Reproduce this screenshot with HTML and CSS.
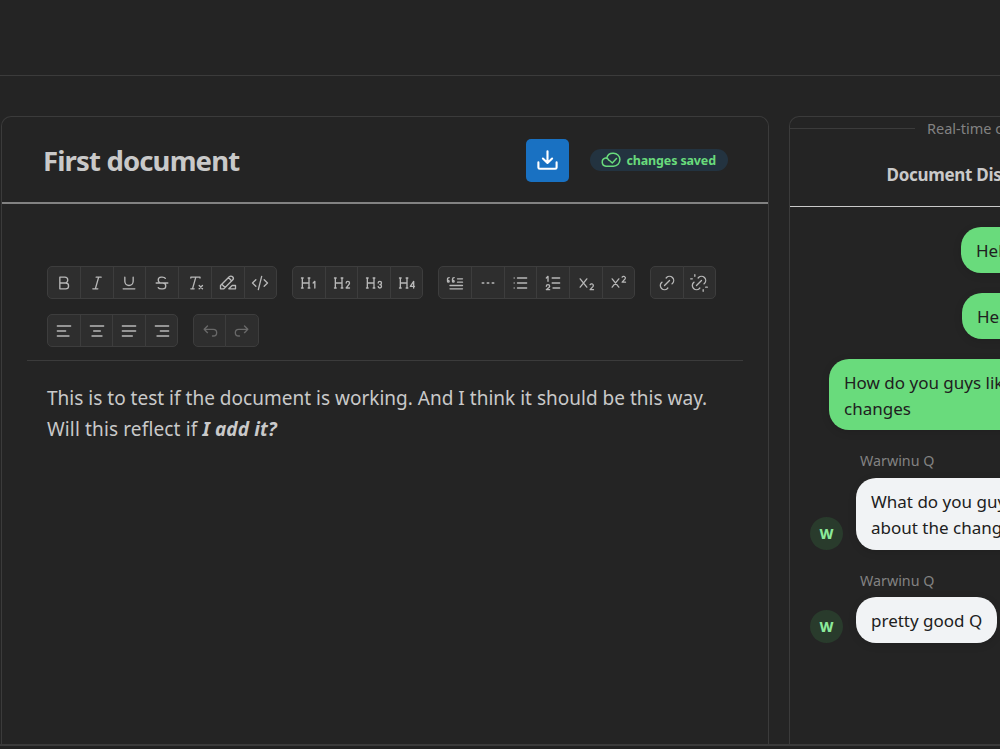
FILE: index.html
```
<!DOCTYPE html>
<html lang="en">
<head>
<meta charset="utf-8">
<title>First document</title>
<link rel="stylesheet" href="styles.css">
</head>
<body>
<div class="app">
  <header class="topbar"></header>
  <main class="workspace">
    <section class="card editor">
      <div class="editor-head">
        <h1 class="title">First document</h1>
        <button class="download" aria-label="Download"><svg viewBox="0 0 24 24"><path d="M2.5 14v5.200a1.400 1.400 0 0 0 1.400 1.400h16.200a1.400 1.400 0 0 0 1.400-1.400V14M12 2.300v12M7.200 10l4.800 4.600 4.800-4.600"/></svg></button>
        <div class="badge"><svg viewBox="0 0 20 16"><path d="M5 14.200a4.100 4.100 0 0 1-.5-8.100h1.200A6.500 6.500 0 0 1 12.300 1.300a6.400 6.400 0 0 1 6.600 6.300c0 3.700-2.700 6.600-6.400 6.600zM4.500 6.100a3.500 3.500 0 0 1 3.300 2M8.800 8.700l2.500 2.300 4.200-4.500"/></svg><span>changes saved</span></div>
      </div>
      <div class="toolbar">
        <div class="group marks">
          <button><svg viewBox="0 0 24 24"><path d="M7 5h6a3.500 3.500 0 0 1 0 7h-6zM13 12h1a3.500 3.500 0 0 1 0 7h-7v-7"/></svg></button>
          <button><svg viewBox="0 0 24 24"><path d="M11 5h6M7 19h6M14 5l-4 14"/></svg></button>
          <button><svg viewBox="0 0 24 24"><path d="M7 5v5a5 5 0 0 0 10 0v-5M5 19h14"/></svg></button>
          <button><svg viewBox="0 0 24 24"><path d="M5 12h14M16 6.500a4 2 0 0 0-4-1.500h-1a3.500 3.500 0 0 0 0 7h2a3.500 3.500 0 0 1 0 7h-1.500a4 2 0 0 1-4-1.500"/></svg></button>
          <button><svg viewBox="0 0 24 24"><path d="M17 15l4 4m0-4l-4 4M7 6v-1h11v1M7 19h4M13 5l-4 14"/></svg></button>
          <button><svg viewBox="0 0 24 24"><path d="M3 19h4l10.500-10.500a2.828 2.828 0 1 0-4-4l-10.500 10.500v4M12.500 5.500l4 4M4.500 13.500l4 4M21 15v4h-8l4-4z"/></svg></button>
          <button><svg viewBox="0 0 24 24"><path d="M7 8l-4 4l4 4M17 8l4 4l-4 4M14 4l-4 16"/></svg></button>
        </div>
        <div class="group">
          <button><svg viewBox="0 0 24 24"><path d="M19 18v-8l-2 2M4 6v12M12 6v12M11 18h2M3 18h2M4 12h8M3 6h2M11 6h2"/></svg></button>
          <button><svg viewBox="0 0 24 24"><path d="M17 12a2 2 0 1 1 4 0c0 .591-.417 1.318-.816 1.858l-3.184 4.143h4M4 6v12M12 6v12M11 18h2M3 18h2M4 12h8M3 6h2M11 6h2"/></svg></button>
          <button><svg viewBox="0 0 24 24"><path d="M19 14a2 2 0 1 0-2-2M17 16a2 2 0 1 0 2-2M4 6v12M12 6v12M11 18h2M3 18h2M4 12h8M3 6h2M11 6h2"/></svg></button>
          <button><svg viewBox="0 0 24 24"><path d="M20 18v-8l-4 6h5M4 6v12M12 6v12M11 18h2M3 18h2M4 12h8M3 6h2M11 6h2"/></svg></button>
        </div>
        <div class="group">
          <button><svg viewBox="0 0 24 24"><path d="M6 15h15M21 19h-15M15 11h6M21 7h-6M9 9h1a1 1 0 1 1-1 1v-2.500a2 2 0 0 1 2-2M3 9h1a1 1 0 1 1-1 1v-2.500a2 2 0 0 1 2-2"/></svg></button>
          <button><svg viewBox="0 0 24 24"><path d="M5 12h2M17 12h2M11 12h2"/></svg></button>
          <button><svg viewBox="0 0 24 24"><path d="M9 6h11M9 12h11M9 18h11M5 6v.01M5 12v.01M5 18v.01"/></svg></button>
          <button><svg viewBox="0 0 24 24"><path d="M11 6h9M11 12h9M12 18h8M4 16a2 2 0 1 1 4 0c0 .591-.5 1-1 1.500l-3 2.500h4M6 10v-6l-2 2"/></svg></button>
          <button><svg viewBox="0 0 24 24"><path d="M5 7l8 10m-8 0l8-10M21 20h-4l3.500-4a1.730 1.730 0 0 0-3.500-2"/></svg></button>
          <button><svg viewBox="0 0 24 24"><path d="M5 7l8 10m-8 0l8-10M21 11h-4l3.500-4a1.730 1.730 0 0 0-3.500-2"/></svg></button>
        </div>
        <div class="group">
          <button><svg viewBox="0 0 24 24"><path d="M9 15l6-6M11 6l.463-.536a5 5 0 0 1 7.071 7.072l-.534.464M13 18l-.397.534a5.068 5.068 0 0 1-7.127 0a4.972 4.972 0 0 1 0-7.071l.524-.463"/></svg></button>
          <button><svg viewBox="0 0 24 24"><path d="M17 22v-2M9 15l6-6M11 6l.463-.536a5 5 0 0 1 7.071 7.072l-.534.464M13 18l-.397.534a5.068 5.068 0 0 1-7.127 0a4.972 4.972 0 0 1 0-7.071l.524-.463M20 17h2M2 7h2M7 2v2"/></svg></button>
        </div>
        <div class="group">
          <button><svg viewBox="0 0 24 24"><path d="M4 6h16M4 12h10M4 18h14"/></svg></button>
          <button><svg viewBox="0 0 24 24"><path d="M4 6h16M8 12h8M6 18h12"/></svg></button>
          <button><svg viewBox="0 0 24 24"><path d="M4 6h16M4 12h16M4 18h12"/></svg></button>
          <button><svg viewBox="0 0 24 24"><path d="M4 6h16M10 12h10M6 18h14"/></svg></button>
        </div>
        <div class="group disabled">
          <button><svg viewBox="0 0 24 24"><path d="M9 14l-4-4l4-4M5 10h11a4 4 0 1 1 0 8h-1"/></svg></button>
          <button><svg viewBox="0 0 24 24"><path d="M15 14l4-4l-4-4M19 10h-11a4 4 0 1 0 0 8h1"/></svg></button>
        </div>
      </div>
      <div class="content">
        <p>This is to test if the document is working. And I think it should be this way.</p>
        <p class="second-line">Will this reflect if <strong><em>I add it?</em></strong></p>
      </div>
    </section>
    <aside class="card chat">
      <div class="divider"><span>Real-time chat</span></div>
      <h2 class="chat-title">Document Discussion</h2>
      <div class="messages">
        <div class="bubble mine first">Hello</div>
        <div class="bubble mine second">Hello</div>
        <div class="bubble mine third">How do you guys like the<br>changes</div>
        <div class="sender">Warwinu Q</div>
        <div class="row"><span class="avatar">W</span><div class="bubble theirs">What do you guys think<br>about the changes?</div></div>
        <div class="sender">Warwinu Q</div>
        <div class="row"><span class="avatar">W</span><div class="bubble theirs">pretty good Q</div></div>
      </div>
    </aside>
  </main>
  <footer class="bottom"></footer>
</div>
</body>
</html>
```
FILE: styles.css
```
* { box-sizing: border-box; }
body {
  margin: 0;
  background: #242424;
  color: #c9c9c9;
  font-family: "Noto Sans", "Open Sans", sans-serif;
  overflow: hidden;
}
h1, h2, p { margin: 0; }
button { padding: 0; border: 0; font: inherit; color: inherit; }
svg { display: block; fill: none; stroke: currentColor; stroke-linecap: round; stroke-linejoin: round; }
.app { height: 749px; display: flex; flex-direction: column; overflow: hidden; }
.topbar { height: 76px; flex: none; border-bottom: 1px solid #3b3b3b; }
.workspace { flex: 1; display: flex; gap: 20px; padding: 40px 0 0 1px; }
.card { flex: none; border: 1px solid #3b3b3b; border-bottom: 0; border-radius: 10px 10px 0 0; }
.editor { width: 768px; }
.editor-head {
  height: 87px;
  border-bottom: 2px solid #828282;
  display: flex;
  align-items: center;
  padding: 1px 40px 0 41px;
}
.title { font-size: 27.5px; line-height: 40px; font-weight: 700; letter-spacing: -0.85px; margin-top: 1px; white-space: nowrap; flex: 1; }
.download {
  width: 43px;
  height: 43px;
  border-radius: 5px;
  background: #1971c2;
  color: #fff;
  display: grid;
  place-items: center;
  margin-right: 21px;
}
.download svg { width: 23px; height: 23px; stroke-width: 2.2; }
.badge {
  width: 138px;
  height: 22px;
  border-radius: 11px;
  background: #233340;
  color: #69db7c;
  display: flex;
  align-items: center;
  gap: 6px;
  padding-left: 10.5px;
  font-size: 12.5px;
  font-weight: 700;
  letter-spacing: -0.15px;
  white-space: nowrap;
}
.badge svg { width: 20px; height: 16px; stroke-width: 1.5; }
.toolbar {
  margin: 62px 25px 0;
  padding: 0 20px 12.5px;
  border-bottom: 1px solid #3b3b3b;
  display: flex;
  flex-wrap: wrap;
  gap: 15px;
}
.group { display: flex; }
.group button {
  width: 33.7px;
  height: 33.2px;
  margin-right: -1px;
  background: #2e2e2e;
  border: 1px solid #3d3d3d;
  color: #b8b8b8;
  display: grid;
  place-items: center;
}
.marks button { width: 33.8px; }
.group button:first-child { border-radius: 5px 0 0 5px; }
.group button:last-child { border-radius: 0 5px 5px 0; margin-right: 0; width: 33.2px; }
.group svg { width: 20px; height: 20px; stroke-width: 1.6; }
.group.disabled { margin-left: -0.6px; }
.group.disabled button { color: #696969; }
.content { padding: 22px 25px 0 45px; font-size: 19px; line-height: 31px; white-space: nowrap; letter-spacing: 0.01px; }
.second-line { letter-spacing: 0.14px; }
.chat { width: 340px; }
.divider { display: flex; align-items: center; gap: 12px; height: 22px; font-size: 14.5px; color: #828282; white-space: nowrap; }
.divider::before, .divider::after { content: ""; height: 1px; width: 125px; flex: none; background: #3b3b3b; }
.chat-title {
  height: 68px;
  border-bottom: 1px solid #c9c9c9;
  padding: 22px 0 0 96.5px;
  font-size: 17px;
  line-height: 28px;
  letter-spacing: -0.3px;
  white-space: nowrap;
}
.messages { display: flex; flex-direction: column; padding: 20px 20px 0; }
.bubble {
  border-radius: 20px;
  padding: 11px 15px 9px;
  font-size: 17px;
  line-height: 26px;
  white-space: nowrap;
  color: #202020;
  box-shadow: 0 2px 8px rgba(0, 0, 0, 0.12);
}
.mine { background: #69db7c; margin-bottom: 20px; }
.first { margin-left: 151px; }
.second { margin-left: 152px; }
.third { margin-left: 19px; padding-bottom: 8px; }
.theirs { background: #f1f3f5; }
.sender { margin-left: 50px; font-size: 14.3px; line-height: 22px; height: 27.5px; color: #828282; }
.row { display: flex; align-items: flex-end; gap: 13px; margin-bottom: 20px; }
.avatar {
  width: 33px;
  height: 33px;
  border-radius: 50%;
  background: #293b2c;
  color: #8ce99a;
  display: grid;
  place-items: center;
  font-size: 14px;
  font-weight: 800;
}
.bottom { flex: none; height: 5px; border-top: 2px solid #3b3b3b; background: #222; }
```
